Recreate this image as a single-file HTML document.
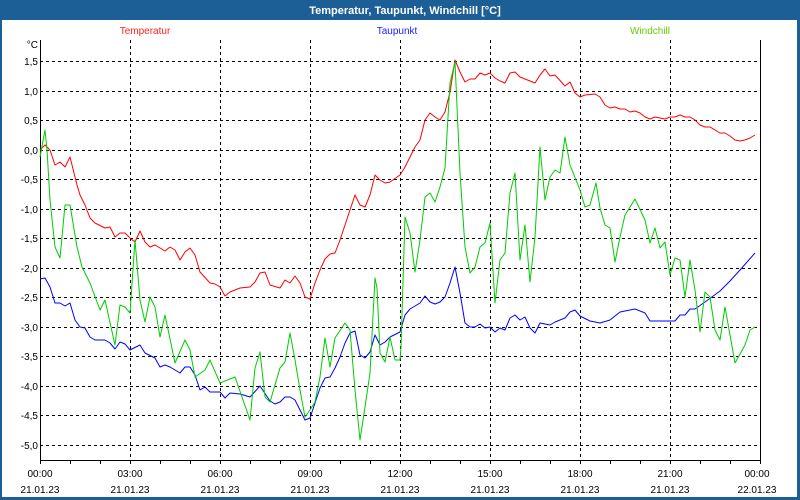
<!DOCTYPE html>
<html><head><meta charset="utf-8"><style>
html,body{margin:0;padding:0;width:800px;height:500px;overflow:hidden;background:#fff}
svg{display:block;font-family:"Liberation Sans",Tahoma,sans-serif}
</style></head><body>
<svg width="800" height="500" viewBox="0 0 800 500" xmlns="http://www.w3.org/2000/svg">
<rect x="0" y="0" width="800" height="500" fill="#1c5e96"/>
<rect x="2" y="20" width="795" height="477" fill="#fff"/>
<text x="405" y="14" fill="#fff" font-size="11" font-weight="bold" text-anchor="middle">Temperatur, Taupunkt, Windchill [°C]</text>
<text x="145" y="34" fill="#ff2020" font-size="10" text-anchor="middle">Temperatur</text>
<text x="397" y="34" fill="#2020ff" font-size="10" text-anchor="middle">Taupunkt</text>
<text x="650" y="34" fill="#66cc00" font-size="10" text-anchor="middle">Windchill</text>
<g stroke="#000" stroke-width="1" stroke-dasharray="3,3" fill="none" shape-rendering="crispEdges">
<path d="M40 61.5H760M40 91.5H760M40 120.5H760M40 150.5H760M40 179.5H760M40 209.5H760M40 238.5H760M40 268.5H760M40 297.5H760M40 327.5H760M40 356.5H760M40 386.5H760M40 415.5H760M40 445.5H760"/>
<path d="M130.5 40V460M220.5 40V460M310.5 40V460M400.5 40V460M490.5 40V460M580.5 40V460M670.5 40V460"/>
</g>
<g stroke="#000" stroke-width="1" fill="none" shape-rendering="crispEdges">
<path d="M40.5 40V460.5H760.5V40"/>
<path d="M40.5 460v4M70.5 460v4M100.5 460v4M130.5 460v4M160.5 460v4M190.5 460v4M220.5 460v4M250.5 460v4M280.5 460v4M310.5 460v4M340.5 460v4M370.5 460v4M400.5 460v4M430.5 460v4M460.5 460v4M490.5 460v4M520.5 460v4M550.5 460v4M580.5 460v4M610.5 460v4M640.5 460v4M670.5 460v4M700.5 460v4M730.5 460v4M760.5 460v4"/>
</g>
<g font-size="10" fill="#000" text-anchor="end">
<text x="38" y="48">°C</text>
<text x="38" y="65">1,5</text><text x="38" y="95">1,0</text><text x="38" y="124">0,5</text><text x="38" y="154">0,0</text><text x="38" y="183">-0,5</text><text x="38" y="213">-1,0</text><text x="38" y="242">-1,5</text><text x="38" y="272">-2,0</text><text x="38" y="301">-2,5</text><text x="38" y="331">-3,0</text><text x="38" y="360">-3,5</text><text x="38" y="390">-4,0</text><text x="38" y="419">-4,5</text><text x="38" y="449">-5,0</text>
</g>
<g font-size="10" fill="#000" text-anchor="middle">
<text x="40" y="477">00:00</text><text x="130" y="477">03:00</text><text x="220" y="477">06:00</text><text x="310" y="477">09:00</text><text x="400" y="477">12:00</text><text x="490" y="477">15:00</text><text x="580" y="477">18:00</text><text x="670" y="477">21:00</text><text x="757" y="477">00:00</text>
<text x="40" y="493">21.01.23</text><text x="130" y="493">21.01.23</text><text x="220" y="493">21.01.23</text><text x="310" y="493">21.01.23</text><text x="400" y="493">21.01.23</text><text x="490" y="493">21.01.23</text><text x="580" y="493">21.01.23</text><text x="670" y="493">21.01.23</text><text x="757" y="493">22.01.23</text>
</g>
<g fill="none" stroke-width="1" stroke-linejoin="round">
<polyline stroke="#ff0000" points="40,150 45,145 50,150 55,165 60,162 65,167 70,157 77,185 80,195 85,205 90,218 95,223 105,228 110,227 115,237 120,233 125,233 130,238 135,242 140,231 145,242 150,247 155,245 165,251 170,247 175,250 180,260 185,252 190,248 195,255 200,272 210,283 215,284 220,287 225,296 230,292 240,288 250,287 255,282 260,273 265,272 270,285 280,288 285,280 290,283 295,276 300,283 305,297 310,299 315,283 320,270 325,259 330,254 335,253 340,240 345,225 350,210 355,195 360,205 365,207 370,195 375,175 380,180 385,183 390,182 400,175 405,167 410,157 415,147 420,140 425,120 430,113 435,117 440,120 445,112 450,92 455,60 460,72 465,82 470,79 475,79 480,73 485,75 490,73 495,78 500,81 505,83 510,73 515,72 520,77 535,83 540,75 545,69 550,76 555,75 565,86 570,82 575,93 580,97 585,95 595,94 600,97 605,105 610,108 615,107 620,109 625,109 630,112 635,111 640,113 645,117 650,119 655,117 660,118 665,119 670,117 675,117 680,115 685,117 690,117 695,120 700,125 705,127 710,127 715,130 720,133 725,133 730,136 735,140 740,141 745,140 750,138 755,135"/>
<polyline stroke="#0000ff" points="40,279 45,278 50,287 55,303 60,303 65,306 70,303 75,320 80,327 85,328 90,337 95,340 105,340 110,343 115,349 120,342 125,344 130,350 140,345 145,353 155,358 160,367 165,365 170,367 180,373 185,367 190,367 195,375 200,390 205,387 210,392 220,392 225,398 230,393 240,394 250,397 260,386 270,401 275,404 280,402 285,397 290,397 295,400 305,420 310,418 315,403 320,388 325,378 330,377 335,368 340,357 345,343 350,333 355,331 360,355 365,358 370,352 375,335 380,345 385,342 390,337 400,332 405,315 410,309 415,306 420,303 425,296 430,302 435,304 440,302 445,297 450,283 455,267 460,293 465,323 470,327 475,327 480,324 485,328 490,327 495,332 500,328 505,330 510,318 515,315 520,320 525,317 530,328 535,333 540,323 550,325 555,322 565,318 570,312 575,310 580,316 590,321 600,323 610,320 620,312 635,309 645,313 650,321 675,321 680,315 685,315 690,309 695,309 705,302 720,291 730,281 740,270 755,253"/>
<polyline stroke="#00cc00" points="40,157 45,130 47,150 50,200 55,247 60,258 65,205 70,205 77,247 82,267 90,283 100,310 105,300 115,345 120,305 125,307 130,313 135,240 140,300 145,322 150,297 155,307 160,337 165,315 175,363 185,340 190,350 195,377 205,370 210,360 220,383 235,377 250,420 255,368 260,352 265,397 270,402 280,368 285,362 290,333 295,360 300,390 305,417 310,410 315,402 320,377 325,338 330,367 335,338 345,323 350,330 355,390 360,440 365,407 370,373 375,278 377,288 380,353 385,362 390,337 395,360 400,360 401,347 405,217 410,233 415,272 420,240 425,197 430,193 435,202 440,187 445,168 450,83 455,62 460,173 465,247 470,273 475,267 480,247 485,243 490,223 495,303 500,260 505,253 510,193 515,173 520,260 525,225 530,282 535,237 540,147 545,200 550,177 555,170 560,173 565,137 570,165 580,190 585,207 590,205 596,183 600,208 605,225 610,228 615,262 620,237 625,215 635,199 645,220 650,243 655,228 660,248 665,242 670,275 675,258 680,260 685,297 690,260 695,290 700,332 705,292 710,297 715,330 720,340 725,307 735,363 745,345 750,330 755,327"/>
</g>
</svg>
</body></html>
